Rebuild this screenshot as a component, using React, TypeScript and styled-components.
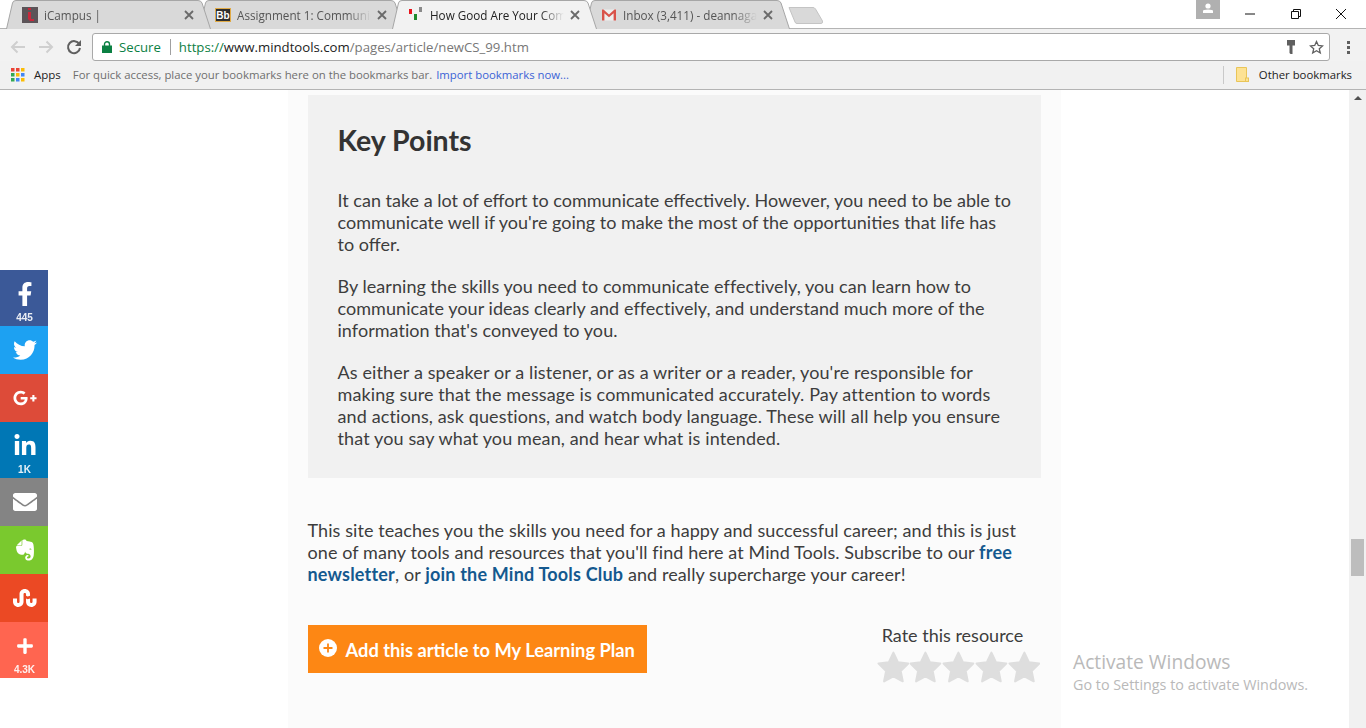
import React from "react";
import styled, { createGlobalStyle } from "styled-components";
import {
  FaEnvelope,
  FaEvernote,
  FaFacebookF,
  FaGooglePlusG,
  FaLinkedinIn,
  FaPlus,
  FaStumbleupon,
  FaTwitter,
} from "react-icons/fa";

const GlobalStyle = createGlobalStyle`
  html, body { margin: 0; padding: 0; height: 100%; overflow: hidden; background: #fff; }
  #root { height: 100%; }
  * { box-sizing: border-box; }
`;

const uiFont = `"Open Sans", "Noto Sans", sans-serif`;
const pageFont = `Lato, "Open Sans", sans-serif`;

const Window = styled.div`
  position: relative;
  display: flex;
  flex-direction: column;
  width: 1366px;
  height: 728px;
  overflow: hidden;
  font-family: ${uiFont};
`;

const TitleBar = styled.div`
  display: flex;
  align-items: flex-start;
  height: 29px;
  padding-left: 6px;
  background: #fff;
  border-bottom: 1px solid #b4b4b4;
`;

const TabStrip = styled.div`
  display: flex;
  height: 28px;
  flex: none;
`;

const TabItem = styled.div<{ $active?: boolean; $z: number }>`
  position: relative;
  z-index: ${({ $active, $z }) => ($active ? 10 : $z)};
  display: flex;
  align-items: center;
  width: 205px;
  height: 29px;
  margin-right: -12px;
  padding: 0 17px 0 16px;
  gap: 6px;
  color: ${({ $active }) => ($active ? "#222" : "#555")};
  font-size: 11.7px;
`;

const TabShape = styled.svg`
  position: absolute;
  left: 0;
  top: 0;
  z-index: -1;
`;

const Favicon = styled.span`
  display: flex;
  flex: none;
  width: 16px;
  height: 16px;
  align-items: center;
  justify-content: center;
`;

const TabTitle = styled.span`
  flex: 1;
  overflow: hidden;
  white-space: nowrap;
  mask-image: linear-gradient(to right, #000 82%, transparent 100%);
`;

const TabClose = styled.svg`
  flex: none;
  width: 10px;
  height: 10px;
  stroke: #6a6a6a;
  stroke-width: 1.8;
`;

const NewTabButton = styled.svg`
  flex: none;
  margin: 6px 0 0 10px;
`;

const WindowControls = styled.div`
  display: flex;
  align-items: flex-start;
  margin-left: auto;
  height: 27px;
  padding-right: 2px;
`;

const AvatarBox = styled.div`
  display: flex;
  align-items: flex-start;
  justify-content: center;
  width: 24px;
  height: 19px;
  margin-right: 8px;
  padding-top: 3px;
  background: #b0b0b0;
`;

const WinButton = styled.div`
  display: flex;
  align-items: center;
  justify-content: center;
  width: 45.5px;
  height: 27px;
`;

const Toolbar = styled.div`
  display: flex;
  align-items: center;
  height: 32px;
  background: #f2f2f2;
  padding-top: 4px;
`;

const NavButton = styled.div`
  display: flex;
  align-items: center;
  justify-content: center;
  width: 28px;
  flex: none;
`;

const NavGroup = styled.div`
  display: flex;
  align-items: center;
  width: 92px;
  padding-left: 4px;
  flex: none;
`;

const Omnibox = styled.div`
  display: flex;
  align-items: center;
  width: 1238px;
  height: 28px;
  background: #fff;
  border: 1px solid #a9a9a9;
  border-radius: 3px;
  padding: 0 5px 0 9px;
  font-size: 13.2px;
`;

const Secure = styled.span`
  margin-left: 7px;
  color: #0b8043;
`;

const OmniDivider = styled.span`
  width: 1px;
  height: 16px;
  margin: 0 8px 0 9px;
  background: #a0a0a0;
`;

const UrlText = styled.span<{ $tone: "scheme" | "host" | "path" }>`
  color: ${({ $tone }) => ($tone === "scheme" ? "#0b8043" : $tone === "host" ? "#222" : "#777")};
`;

const OmniIcons = styled.div`
  display: flex;
  align-items: center;
  gap: 14px;
  margin-left: auto;
`;

const MenuDots = styled.div`
  display: flex;
  flex-direction: column;
  gap: 2px;
  margin-left: 17px;
  flex: none;

  span {
    width: 3px;
    height: 3px;
    background: #5f5f5f;
  }
`;

const BookmarksBar = styled.div`
  display: flex;
  align-items: center;
  height: 29px;
  padding: 0 14px 1px 11px;
  background: #f1f1f1;
  border-bottom: 1px solid #b4b4b4;
  font-size: 11.35px;
  white-space: nowrap;
`;

const AppsLabel = styled.span`
  margin: 0 12px 0 9px;
  color: #222;
  font-size: 11.5px;
`;

const BarHint = styled.span`
  color: #6f6f6f;
`;

const BarLink = styled.span`
  margin-left: 4px;
  color: #3b63d6;
`;

const OtherBookmarks = styled.div`
  display: flex;
  align-items: center;
  gap: 10px;
  margin-left: auto;
  height: 18px;
  padding-left: 12px;
  border-left: 1px solid #c9c9c9;
  color: #222;
`;

const Viewport = styled.div`
  display: flex;
  flex: 1;
  min-height: 0;
`;

const PageArea = styled.main`
  flex: 1;
  display: flex;
  justify-content: center;
  padding-right: 1px;
  font-family: ${pageFont};
  color: #3d3d3d;
`;

const ArticleColumn = styled.article`
  width: 773px;
  padding: 5px 20px 0;
  background: #fbfbfb;
`;

const KeyPoints = styled.section`
  height: 383px;
  padding: 29px 20px 0 30px;
  background: #f1f1f1;
`;

const KeyHeading = styled.h2`
  margin: 0 0 33px;
  font-size: 28.5px;
  line-height: 32px;
  font-weight: 700;
  color: #333;
`;

const Para = styled.p<{ $track?: number }>`
  margin: 0 0 20px;
  font-size: 18px;
  line-height: 22px;
  letter-spacing: ${({ $track }) => $track ?? 0}px;
  white-space: nowrap;
`;

const Outro = styled(Para)`
  margin: 41px 0 40px;
`;

const StrongLink = styled.a`
  color: #14598f;
  font-weight: 700;
  letter-spacing: 0.2px;
`;

const ActionRow = styled.div`
  display: flex;
  justify-content: space-between;
  align-items: flex-start;
`;

const PlanButton = styled.div`
  display: flex;
  align-items: center;
  gap: 9px;
  width: 339px;
  height: 48px;
  padding: 2px 11px 0;
  background: #fd8714;
  color: #fff;
  font-size: 18.3px;
  font-weight: 700;
  white-space: nowrap;

  svg {
    margin-bottom: 5px;
  }
`;

const RatePanel = styled.div`
  display: flex;
  flex-direction: column;
  align-items: center;
  width: 164px;
  margin-top: -1px;
`;

const RateLabel = styled.div`
  margin: 0 12px 5px 0;
  font-size: 18px;
  line-height: 22px;
`;

const Stars = styled.div`
  display: flex;
  justify-content: space-between;
  width: 164px;
`;

const ScrollTrack = styled.div`
  position: relative;
  flex: none;
  width: 17px;
  background: #f1f1f1;
`;

const ScrollArrow = styled.div`
  margin: 6px auto 0;
  width: 0;
  height: 0;
  border-left: 4px solid transparent;
  border-right: 4px solid transparent;
  border-bottom: 4px solid #505050;
`;

const ScrollThumb = styled.div`
  position: absolute;
  left: 2px;
  top: 449px;
  width: 13px;
  height: 37px;
  background: #bdbdbd;
`;

const ShareRail = styled.aside`
  position: absolute;
  left: 0;
  top: 270px;
  display: flex;
  flex-direction: column;
  width: 48px;
`;

const ShareButton = styled.div<{ $bg: string; $tall?: boolean }>`
  display: flex;
  flex-direction: column;
  align-items: center;
  justify-content: flex-start;
  height: ${({ $tall }) => ($tall ? 56 : 48)}px;
  padding: 12px 0 0 1px;
  background: ${({ $bg }) => $bg};
  color: #fff;
  font-size: 24px;
  line-height: 0;
`;

const PlusIcon = styled(FaPlus)`
  margin: 3px 0;
  font-size: 18px;
`;

const ShareCount = styled.span`
  margin-top: 6px;
  font-family: "Liberation Sans", Arial, sans-serif;
  font-size: 10px;
  font-weight: 700;
  line-height: 12px;
  opacity: 0.9;
`;

const Watermark = styled.div`
  position: absolute;
  left: 1073px;
  top: 649px;
  color: #b9b9b9;
  font-size: 14.35px;
  line-height: 20px;
  pointer-events: none;
`;

const WatermarkTitle = styled.div`
  font-size: 19.2px;
  line-height: 26px;
`;

const tabPath = "M0.5 29 L6.5 3 Q7 0.5 10 0.5 L192 0.5 Q195 0.5 196 3 L204.5 29";

type TabProps = {
  title: string;
  icon: React.ReactNode;
  active?: boolean;
  z: number;
};

const Tab = ({ title, icon, active, z }: TabProps) => (
  <TabItem $active={active} $z={z}>
    <TabShape width="205" height="29" viewBox="0 0 205 29">
      <path d={tabPath} fill={active ? "#f2f2f2" : "#d9d9d9"} stroke="#a6a6a6" />
    </TabShape>
    <Favicon>{icon}</Favicon>
    <TabTitle>{title}</TabTitle>
    <TabClose viewBox="0 0 10 10">
      <path d="M1 1 L9 9 M9 1 L1 9" />
    </TabClose>
  </TabItem>
);

const ICampusIcon = () => (
  <svg width="16" height="16" viewBox="0 0 16 16">
    <rect width="16" height="16" fill="#5c5458" />
    <path d="M6 1h3v2H6z M6 5h3v7h3v2H8l-2-2z" fill="#c8283c" />
  </svg>
);

const BbIcon = () => (
  <svg width="16" height="16" viewBox="0 0 16 16">
    <rect x="0.5" y="1.5" width="15" height="13" fill="#2f2f2f" stroke="#e0aa46" />
    <text x="8" y="12" textAnchor="middle" fontSize="10" fontWeight="700" fill="#fff" fontFamily="Liberation Sans">
      Bb
    </text>
  </svg>
);

const MindToolsIcon = () => (
  <svg width="16" height="16" viewBox="0 0 16 16">
    <rect x="1" y="2" width="3" height="5" fill="#e8141c" />
    <rect x="6" y="7" width="3" height="6" fill="#1e8a2e" />
    <rect x="11" y="0" width="3" height="5" fill="#8a8a8a" />
  </svg>
);

const GmailIcon = () => (
  <svg width="16" height="16" viewBox="0 0 16 16">
    <rect x="1" y="2.5" width="14" height="11" fill="#eee" />
    <path d="M1 13.5V2.5h1.5L8 7.5l5.5-5H15v11h-2.4V6.2L8 10.2 3.4 6.2v7.3z" fill="#d9534a" />
  </svg>
);

const Star = () => (
  <svg width="33" height="33" viewBox="0 0 32 32">
    <path
      d="M16 1.5 L20.4 10.9 L30.5 12.1 L23.1 19.4 L25.1 29.5 L16 24.6 L6.9 29.5 L8.9 19.4 L1.5 12.1 L11.6 10.9 Z"
      fill="#dedede"
      stroke="#dedede"
      strokeWidth="2"
      strokeLinejoin="round"
    />
  </svg>
);

export default function App() {
  return (
    <Window>
      <GlobalStyle />
      <TitleBar>
        <TabStrip>
          <Tab title="iCampus |" icon={<ICampusIcon />} z={4} />
          <Tab title="Assignment 1: Communication" icon={<BbIcon />} z={3} />
          <Tab title="How Good Are Your Communication" icon={<MindToolsIcon />} active z={2} />
          <Tab title="Inbox (3,411) - deannagarcia" icon={<GmailIcon />} z={1} />
        </TabStrip>
        <NewTabButton width="36" height="19" viewBox="0 0 36 19">
          <path d="M1 1.5 L25 1.5 Q26.5 1.5 27.5 3 L34.5 15 Q35 17.5 33 17.5 L9 17.5 Q7.5 17.5 7 16 Z" fill="#d9d9d9" stroke="#c4c4c4" />
        </NewTabButton>
        <WindowControls>
          <AvatarBox>
            <svg width="10" height="10" viewBox="0 0 10 10">
              <circle cx="5" cy="3" r="2.6" fill="#fff" />
              <path d="M0 10 V8 Q0 6.5 5 6.5 Q10 6.5 10 8 V10 Z" fill="#fff" />
            </svg>
          </AvatarBox>
          <WinButton>
            <svg width="10" height="2" viewBox="0 0 10 2">
              <path d="M0 1H10" stroke="#111" />
            </svg>
          </WinButton>
          <WinButton>
            <svg width="10" height="10" viewBox="0 0 10 10">
              <path d="M0.5 2.5h7v7h-7z M2.5 2.5v-2h7v7h-2" fill="none" stroke="#111" />
            </svg>
          </WinButton>
          <WinButton>
            <svg width="10" height="10" viewBox="0 0 10 10">
              <path d="M0 0L10 10M10 0L0 10" stroke="#111" />
            </svg>
          </WinButton>
        </WindowControls>
      </TitleBar>

      <Toolbar>
        <NavGroup>
          <NavButton>
            <svg width="16" height="14" viewBox="0 0 16 14">
              <path d="M15 7H2M7.5 1.5L2 7l5.5 5.5" fill="none" stroke="#cfcfcf" strokeWidth="2" />
            </svg>
          </NavButton>
          <NavButton>
            <svg width="16" height="14" viewBox="0 0 16 14">
              <path d="M1 7H14M8.5 1.5L14 7l-5.5 5.5" fill="none" stroke="#cfcfcf" strokeWidth="2" />
            </svg>
          </NavButton>
          <NavButton>
            <svg width="16" height="16" viewBox="0 0 16 16">
              <path d="M13.3 5.2A6 6 0 1 0 14 9" fill="none" stroke="#5f5f5f" strokeWidth="2" />
              <path d="M15 1v6H9z" fill="#5f5f5f" />
            </svg>
          </NavButton>
        </NavGroup>
        <Omnibox>
          <svg width="10" height="12" viewBox="0 0 10 12">
            <rect y="4.5" width="10" height="7.5" fill="#0b8043" />
            <path d="M2.5 5V3.2a2.5 2.5 0 0 1 5 0V5" fill="none" stroke="#0b8043" strokeWidth="1.4" />
          </svg>
          <Secure>Secure</Secure>
          <OmniDivider />
          <UrlText $tone="scheme">https://</UrlText>
          <UrlText $tone="host">www.mindtools.com</UrlText>
          <UrlText $tone="path">/pages/article/newCS_99.htm</UrlText>
          <OmniIcons>
            <svg width="8" height="14" viewBox="0 0 8 14">
              <path d="M0 0h8v5.5H5.5V14H3.5L2.5 13V5.5H0z" fill="#5f5f5f" />
            </svg>
            <svg width="15" height="15" viewBox="0 0 15 15">
              <path d="M7.5 1.5l1.8 4 4.3.4-3.3 2.9 1 4.2-3.8-2.2-3.8 2.2 1-4.2L1.4 5.9l4.3-.4z" fill="none" stroke="#5f5f5f" strokeWidth="1.3" />
            </svg>
          </OmniIcons>
        </Omnibox>
        <MenuDots>
          <span />
          <span />
          <span />
        </MenuDots>
      </Toolbar>

      <BookmarksBar>
        <svg width="14" height="14" viewBox="0 0 14 14">
          <rect width="3.5" height="3.5" fill="#ea4335" />
          <rect x="5" width="3.5" height="3.5" fill="#ea4335" />
          <rect x="10" width="3.5" height="3.5" fill="#fbbc05" />
          <rect y="5" width="3.5" height="3.5" fill="#34a853" />
          <rect x="5" y="5" width="3.5" height="3.5" fill="#fbbc05" />
          <rect x="10" y="5" width="3.5" height="3.5" fill="#4285f4" />
          <rect y="10" width="3.5" height="3.5" fill="#34a853" />
          <rect x="5" y="10" width="3.5" height="3.5" fill="#4285f4" />
          <rect x="10" y="10" width="3.5" height="3.5" fill="#fbbc05" />
        </svg>
        <AppsLabel>Apps</AppsLabel>
        <BarHint>For quick access, place your bookmarks here on the bookmarks bar.</BarHint>
        <BarLink>Import bookmarks now...</BarLink>
        <OtherBookmarks>
          <svg width="13" height="15" viewBox="0 0 13 15">
            <path d="M0.5 0.5h10v14H0.5z" fill="#fde293" stroke="#e9c558" />
            <rect x="9.5" y="11" width="3" height="3.5" fill="#fde293" stroke="#e9c558" />
          </svg>
          Other bookmarks
        </OtherBookmarks>
      </BookmarksBar>

      <Viewport>
        <PageArea>
          <ArticleColumn>
            <KeyPoints>
              <KeyHeading>Key Points</KeyHeading>
              <Para>
                It can take a lot of effort to communicate effectively. However, you need to be able to<br />
                communicate well if you're going to make the most of the opportunities that life has<br />
                to offer.
              </Para>
              <Para $track={0.05}>
                By learning the skills you need to communicate effectively, you can learn how to<br />
                communicate your ideas clearly and effectively, and understand much more of the<br />
                information that's conveyed to you.
              </Para>
              <Para $track={0.12}>
                As either a speaker or a listener, or as a writer or a reader, you're responsible for<br />
                making sure that the message is communicated accurately. Pay attention to words<br />
                and actions, ask questions, and watch body language. These will all help you ensure<br />
                that you say what you mean, and hear what is intended.
              </Para>
            </KeyPoints>
            <Outro $track={0.08}>
              This site teaches you the skills you need for a happy and successful career; and this is just<br />
              one of many tools and resources that you'll find here at Mind Tools. Subscribe to our{" "}
              <StrongLink>free<br />newsletter</StrongLink>, or <StrongLink>join the Mind Tools Club</StrongLink> and
              really supercharge your career!
            </Outro>
            <ActionRow>
              <PlanButton>
                <svg width="18" height="18" viewBox="0 0 18 18">
                  <circle cx="9" cy="9" r="9" fill="#fff" />
                  <path d="M9 4.5v9M4.5 9h9" stroke="#fd8714" strokeWidth="1.8" />
                </svg>
                Add this article to My Learning Plan
              </PlanButton>
              <RatePanel>
                <RateLabel>Rate this resource</RateLabel>
                <Stars>
                  <Star />
                  <Star />
                  <Star />
                  <Star />
                  <Star />
                </Stars>
              </RatePanel>
            </ActionRow>
          </ArticleColumn>
        </PageArea>
        <ScrollTrack>
          <ScrollArrow />
          <ScrollThumb />
        </ScrollTrack>
      </Viewport>

      <ShareRail>
        <ShareButton $bg="#3b5998" $tall>
          <FaFacebookF />
          <ShareCount>445</ShareCount>
        </ShareButton>
        <ShareButton $bg="#1da1f2">
          <FaTwitter />
        </ShareButton>
        <ShareButton $bg="#dd4b39">
          <FaGooglePlusG />
        </ShareButton>
        <ShareButton $bg="#0077b5" $tall>
          <FaLinkedinIn />
          <ShareCount>1K</ShareCount>
        </ShareButton>
        <ShareButton $bg="#848484">
          <FaEnvelope />
        </ShareButton>
        <ShareButton $bg="#7ac92e">
          <FaEvernote />
        </ShareButton>
        <ShareButton $bg="#eb4924">
          <FaStumbleupon />
        </ShareButton>
        <ShareButton $bg="#ff6550" $tall>
          <PlusIcon />
          <ShareCount>4.3K</ShareCount>
        </ShareButton>
      </ShareRail>

      <Watermark>
        <WatermarkTitle>Activate Windows</WatermarkTitle>
        Go to Settings to activate Windows.
      </Watermark>
    </Window>
  );
}
